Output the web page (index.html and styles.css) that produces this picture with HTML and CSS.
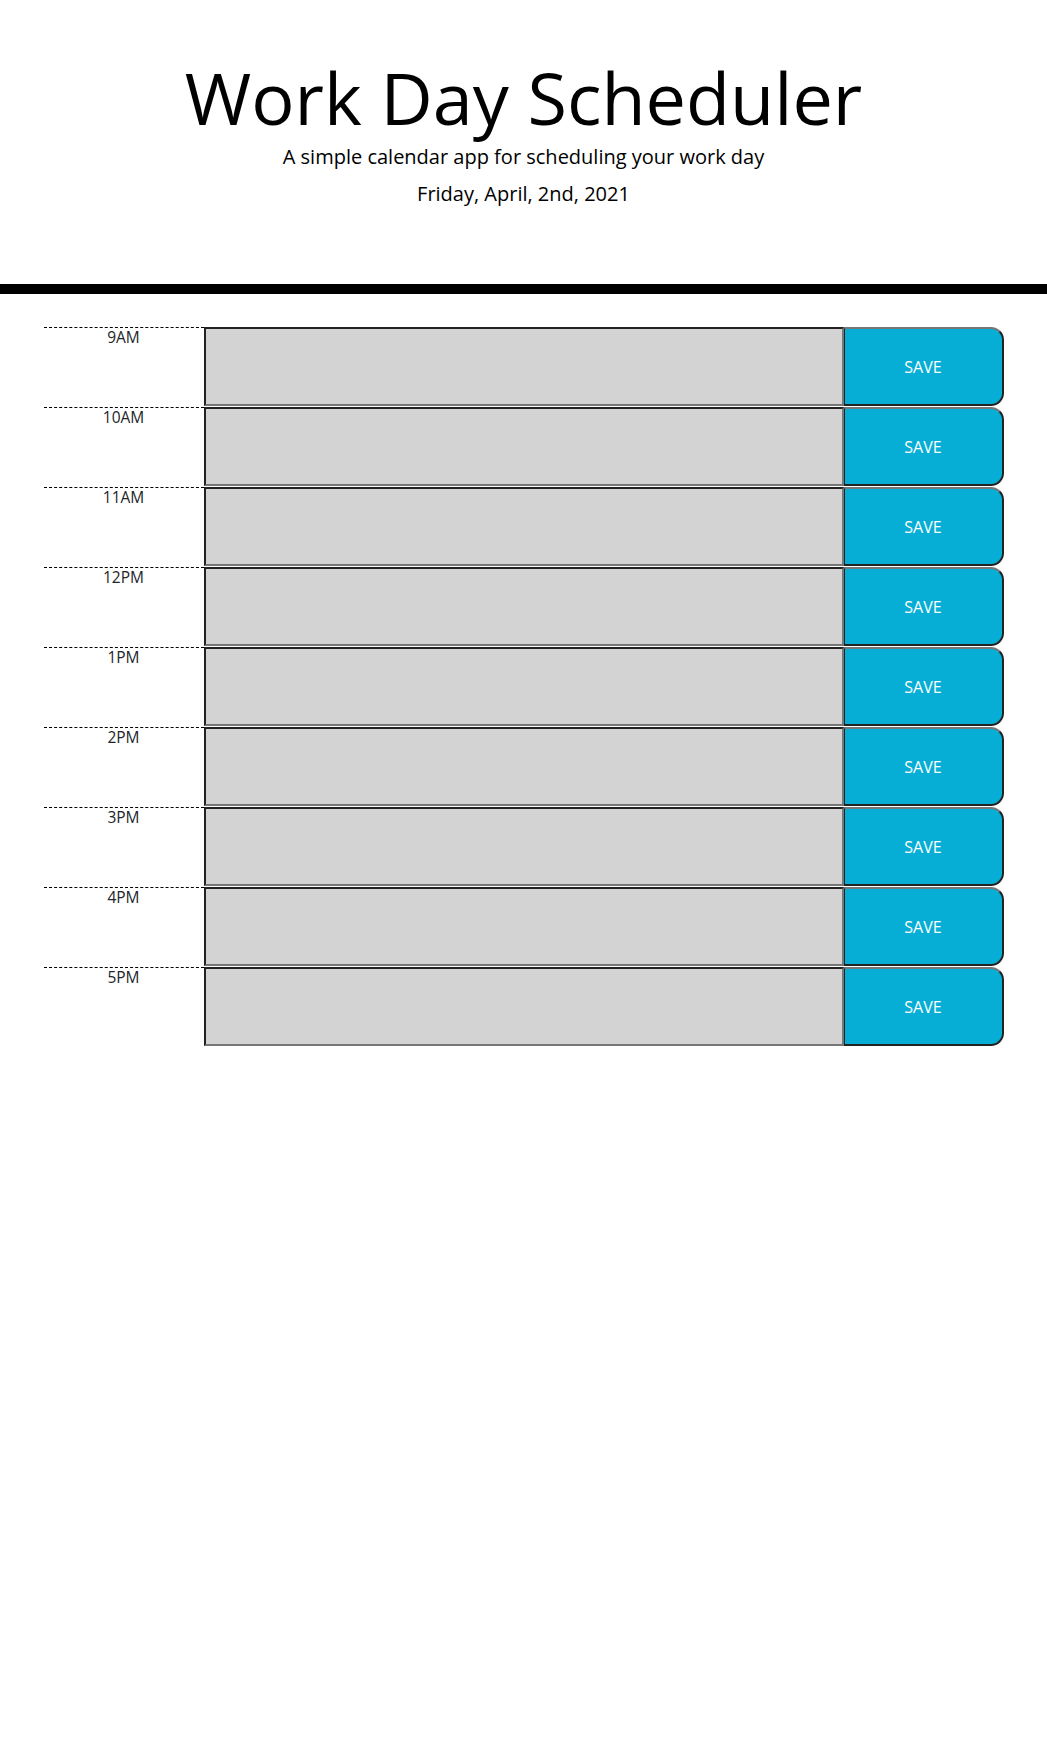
FILE: index.html
```html
<!DOCTYPE html>
<html lang="en">
<head>
<meta charset="utf-8">
<title>Work Day Scheduler</title>
<link rel="stylesheet" href="styles.css">
</head>
<body>
<header class="jumbotron">
  <h1 class="title">Work Day Scheduler</h1>
  <p class="lead">A simple calendar app for scheduling your work day</p>
  <p class="lead current-day">Friday, April, 2nd, 2021</p>
</header>
<main class="container">
  <div class="row"><div class="hour">9AM</div><div class="description"></div><button class="save-btn">SAVE</button></div>
  <div class="row"><div class="hour">10AM</div><div class="description"></div><button class="save-btn">SAVE</button></div>
  <div class="row"><div class="hour">11AM</div><div class="description"></div><button class="save-btn">SAVE</button></div>
  <div class="row"><div class="hour">12PM</div><div class="description"></div><button class="save-btn">SAVE</button></div>
  <div class="row"><div class="hour">1PM</div><div class="description"></div><button class="save-btn">SAVE</button></div>
  <div class="row"><div class="hour">2PM</div><div class="description"></div><button class="save-btn">SAVE</button></div>
  <div class="row"><div class="hour">3PM</div><div class="description"></div><button class="save-btn">SAVE</button></div>
  <div class="row"><div class="hour">4PM</div><div class="description"></div><button class="save-btn">SAVE</button></div>
  <div class="row"><div class="hour">5PM</div><div class="description"></div><button class="save-btn">SAVE</button></div>
</main>
</body>
</html>
```
FILE: styles.css
```css
* { box-sizing: border-box; }

body {
  margin: 0;
  background: #ffffff;
  color: #000000;
  font-family: "Open Sans", "Liberation Sans", sans-serif;
}

.jumbotron {
  text-align: center;
  padding: 54px 32px 75px;
  border-bottom: 10px solid #000000;
  margin-bottom: 33px;
}

.title {
  margin: 0 0 2px;
  font-size: 72px;
  font-weight: 400;
  line-height: 86px;
}

.lead {
  margin: 0;
  font-size: 20px;
  font-weight: 400;
  line-height: 30px;
}

.current-day {
  margin-top: 7px;
}

.container {
  width: 960px;
  margin: 0 auto;
}

.row {
  display: flex;
  height: 79px;
  margin-bottom: 1px;
}

.hour {
  width: 160px;
  flex: none;
  border-top: 1px dashed #000000;
  text-align: center;
  font-family: "Open Sans", "Liberation Sans", sans-serif;
  font-size: 15.5px;
  line-height: 18px;
  color: #212529;
}

.description {
  flex: 1;
  background: #d3d3d3;
  border-style: solid;
  border-width: 2px;
  border-color: #222222 #767676 #767676 #222222;
}

.save-btn {
  width: 160px;
  flex: none;
  background: #06aed5;
  color: #ffffff;
  font-family: "Open Sans", "Liberation Sans", sans-serif;
  font-size: 16px;
  border-style: solid;
  border-width: 2px 2px 2px 1px;
  border-color: #767676 #222222 #222222 #222222;
  border-radius: 0 13px 13px 0;
  padding: 0;
}
```
